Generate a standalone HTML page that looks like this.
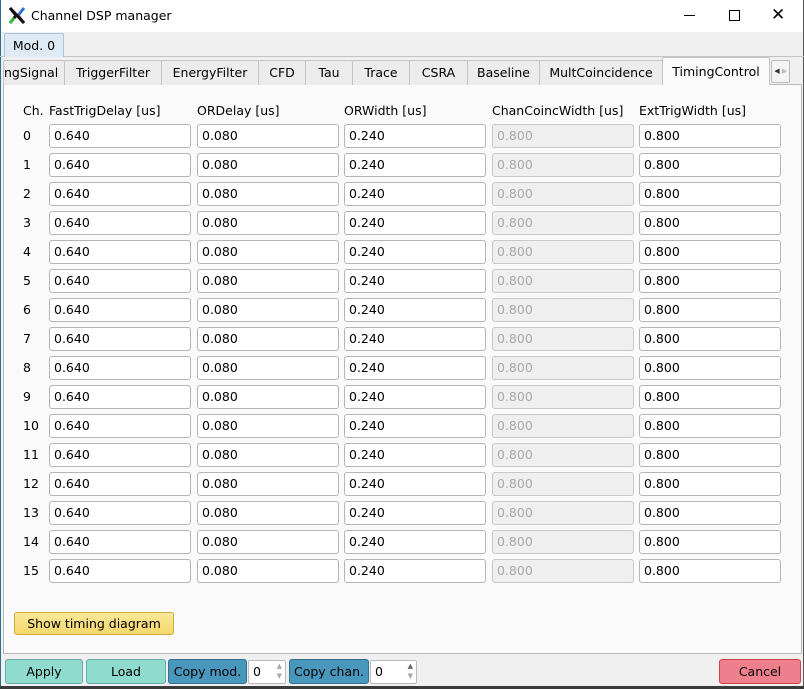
<!DOCTYPE html>
<html><head><meta charset="utf-8"><style>
*{box-sizing:border-box;margin:0;padding:0}
body{width:804px;height:689px;overflow:hidden;background:#f0f0f0;font-family:"DejaVu Sans","Liberation Sans",sans-serif;font-size:12.5px;color:#000;position:relative}
.a{position:absolute}
.title{left:0;top:0;width:804px;height:32px;background:#fff}
.tab{position:absolute;top:60px;height:25px;border:1px solid #c4c4c4;border-bottom:none;background:#ececec;text-align:center;line-height:24px;border-radius:2px 2px 0 0}
.panel{left:3px;top:84px;width:799px;height:570px;background:#fafafa;border:1px solid #b8b8b8}
.f{position:absolute;width:142px;height:24px;border:1px solid #b5b5b5;border-radius:3px;background:#fff;padding-left:4px;line-height:22px}
.f.d{background:#efefef;color:#a8a8a8;border-color:#c8c8c8}
.lbl{position:absolute;line-height:16px}
.btn{position:absolute;top:659px;height:25px;border:1px solid #6aa;border-radius:3px;text-align:center;line-height:23px}
.spin{position:absolute;top:660px;height:24px;background:#fff;border:1px solid #bbb;border-radius:2px;padding-left:4px;line-height:22px}
</style></head><body>
<div class="a title"></div>
<div class="a" style="left:0;top:0;width:1px;height:689px;background:#2a6f8f"></div>
<div class="a" style="left:803px;top:0;width:1px;height:689px;background:#555"></div>
<svg class="a" style="left:8px;top:7px" width="18" height="17" viewBox="0 0 18 17">
<path d="M2 1 L8 8.5 L2 16" stroke="#111" stroke-width="3" fill="none"/>
<path d="M16 1 L10 8.5" stroke="#3070e0" stroke-width="3"/>
<path d="M10 8.5 L16 16" stroke="#e03030" stroke-width="3"/>
<path d="M2 16 L6 11" stroke="#30c030" stroke-width="3"/>
<path d="M2 1 L16 16" stroke="#111" stroke-width="3"/>
</svg>
<div class="a" style="left:31px;top:8px;font-size:12.5px">Channel DSP manager</div>
<div class="a" style="left:684px;top:15px;width:11px;height:1px;background:#000"></div>
<div class="a" style="left:729px;top:10px;width:11px;height:11px;border:1px solid #000"></div>
<div class="a" style="left:771px;top:6px;font-size:17px;line-height:18px">✕</div>

<div class="a" style="left:0;top:56px;width:804px;height:1px;background:#c4c4c4"></div>
<div class="a" style="left:4px;top:33px;width:60px;height:24px;background:#deebf5;border:1px solid #a9c2d6;border-bottom:none;border-radius:2px 2px 0 0;text-align:center;line-height:23px">Mod. 0</div>

<div class="a panel"></div>
<div class="tab" style="left:3px;width:62px;text-align:right;padding-right:11px;overflow:hidden;white-space:nowrap">ngSignal</div>
<div class="tab" style="left:64px;width:98px">TriggerFilter</div>
<div class="tab" style="left:161px;width:98px">EnergyFilter</div>
<div class="tab" style="left:258px;width:48px">CFD</div>
<div class="tab" style="left:305px;width:48px">Tau</div>
<div class="tab" style="left:352px;width:58px">Trace</div>
<div class="tab" style="left:409px;width:59px">CSRA</div>
<div class="tab" style="left:467px;width:73px">Baseline</div>
<div class="tab" style="left:539px;width:124px">MultCoincidence</div>
<div class="tab" style="left:662px;width:108px;top:57px;height:28px;background:#fafafa;line-height:28px">TimingControl</div>
<div class="a" style="left:771px;top:60px;width:19px;height:23px;background:#f4f4f4;border:1px solid #bbb;border-radius:2px;font-size:7px;line-height:21px;color:#333">&nbsp;◀ <span style="color:#bbb">▶</span></div>

<div class="lbl" style="left:23px;top:103px">Ch.</div>
<div class="lbl" style="left:49px;top:103px">FastTrigDelay [us]</div>
<div class="lbl" style="left:197px;top:103px">ORDelay [us]</div>
<div class="lbl" style="left:344px;top:103px">ORWidth [us]</div>
<div class="lbl" style="left:492px;top:103px">ChanCoincWidth [us]</div>
<div class="lbl" style="left:639px;top:103px">ExtTrigWidth [us]</div>

<div id="rows"></div>
<script>
var h='';for(var i=0;i<16;i++){var y=124+i*29;
h+='<div class="lbl" style="left:23px;top:'+(y+4)+'px">'+i+'</div>'+
'<div class="f" style="left:49px;top:'+y+'px">0.640</div>'+
'<div class="f" style="left:197px;top:'+y+'px">0.080</div>'+
'<div class="f" style="left:344px;top:'+y+'px">0.240</div>'+
'<div class="f d" style="left:492px;top:'+y+'px">0.800</div>'+
'<div class="f" style="left:639px;top:'+y+'px">0.800</div>';}
document.getElementById('rows').innerHTML=h;
</script>

<div class="a" style="left:14px;top:612px;width:160px;height:23px;background:linear-gradient(#fbe89a,#f3d86a);border:1px solid #c9ac3c;border-radius:3px;text-align:center;line-height:21px">Show timing diagram</div>

<div class="btn" style="left:5px;width:78px;background:#8fdccf">Apply</div>
<div class="btn" style="left:86px;width:80px;background:#8fdccf">Load</div>
<div class="btn" style="left:168px;width:79px;background:#4a97bd;border-color:#2f6f90">Copy mod.</div>
<div class="spin" style="left:248px;width:38px">0<span style="position:absolute;right:3px;top:0;font-size:7px;line-height:10px;color:#aaa">▲<br>▼</span></div>
<div class="btn" style="left:289px;width:80px;background:#4a97bd;border-color:#2f6f90">Copy chan.</div>
<div class="spin" style="left:370px;width:47px">0<span style="position:absolute;right:3px;top:0;font-size:7px;line-height:10px;color:#666">▲<br><span style="color:#aaa">▼</span></span></div>
<div class="btn" style="left:719px;width:82px;background:#ef7f8c;border-color:#c44">Cancel</div>
<div class="a" style="left:0;top:686px;width:804px;height:3px;background:#3a3a3a"></div>
</body></html>
